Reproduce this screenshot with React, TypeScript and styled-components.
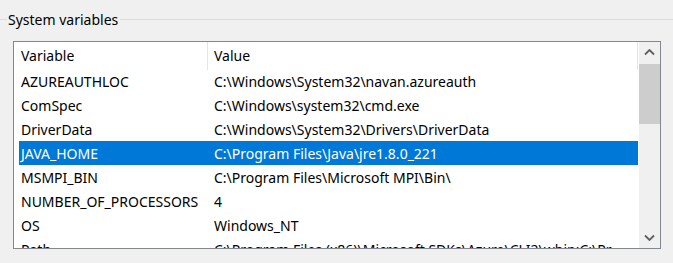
import React from "react";
import styled, { createGlobalStyle } from "styled-components";

const GlobalStyle = createGlobalStyle`
    html, body {
        margin: 0;
        padding: 0;
        background: #f0f0f0;
        font-family: "Noto Sans", "Liberation Sans", sans-serif;
        font-size: 14px;
        color: #000;
    }
`

interface EnvVar {
    name: string;
    value: string;
}

const systemVars: EnvVar[] = [
    { name: "AZUREAUTHLOC", value: "C:\\Windows\\System32\\navan.azureauth" },
    { name: "ComSpec", value: "C:\\Windows\\system32\\cmd.exe" },
    { name: "DriverData", value: "C:\\Windows\\System32\\Drivers\\DriverData" },
    { name: "JAVA_HOME", value: "C:\\Program Files\\Java\\jre1.8.0_221" },
    { name: "MSMPI_BIN", value: "C:\\Program Files\\Microsoft MPI\\Bin\\" },
    { name: "NUMBER_OF_PROCESSORS", value: "4" },
    { name: "OS", value: "Windows_NT" },
    { name: "Path", value: "C:\\Program Files (x86)\\Microsoft SDKs\\Azure\\CLI2\\wbin;C:\\Pr" },
];

const selectedName = "JAVA_HOME";

const Page = styled.div`
    width: 673px;
    height: 263px;
    overflow: hidden;
`

const GroupTitle = styled.div`
    display: flex;
    align-items: center;
    height: 20px;
    margin-top: 10px;
`

const GroupLine = styled.div<{ $stub?: boolean }>`
    height: 0;
    margin-top: -2px;
    border-top: 1px solid #dcdcdc;
    ${p => p.$stub ? "width: 7px;" : "flex: 1;"}
`

const GroupLabel = styled.span`
    padding: 0 2px 0 1px;
    line-height: 20px;
`

const ListBox = styled.div`
    margin: 11px 0 0 13px;
    width: 648px;
    height: 208px;
    box-sizing: border-box;
    border: 1px solid #828790;
    background: #fff;
    display: grid;
    grid-template-columns: 625px 21px;
    overflow: hidden;
`

const Content = styled.div`
    overflow: hidden;
`

const HeaderRow = styled.div`
    display: grid;
    grid-template-columns: 194px 430px;
    height: 27px;
`

const HeaderCell = styled.div<{ $pad: number }>`
    border-right: 1px solid #e5e5e5;
    padding-left: ${p => p.$pad}px;
    line-height: 28px;
    white-space: nowrap;
`

const Row = styled.div<{ $selected?: boolean }>`
    display: grid;
    grid-template-columns: 188px 1fr;
    height: 24px;
    margin: 0 0 0 5px;
    width: 619px;
    line-height: 25px;
    white-space: nowrap;
    background: ${p => p.$selected ? "#0078d7" : "transparent"};
    color: ${p => p.$selected ? "#fff" : "#000"};
`

const Cell = styled.div<{ $pad: number }>`
    padding-left: ${p => p.$pad}px;
    overflow: hidden;
`

const ScrollBar = styled.div`
    display: flex;
    flex-direction: column;
    background: #f0f0f0;
`

const ArrowButton = styled.div`
    height: 21px;
    display: flex;
    align-items: center;
    justify-content: center;
`

const Track = styled.div`
    flex: 1;
`

const Thumb = styled.div`
    height: 60px;
    margin-top: 1px;
    background: #cdcdcd;
`

const Chevron: React.FC<{ down?: boolean }> = ({ down }) => (
    <svg width="11" height="7" viewBox="0 0 11 7">
        <path
            d={down ? "M1 1.5 L5.5 6 L10 1.5" : "M1 5.5 L5.5 1 L10 5.5"}
            fill="none"
            stroke="#606060"
            strokeWidth="1.8"
        />
    </svg>
);

const App: React.FC = () => {
    return (<Page>
        <GlobalStyle />
        <GroupTitle>
            <GroupLine $stub />
            <GroupLabel>System variables</GroupLabel>
            <GroupLine />
        </GroupTitle>
        <ListBox>
            <Content>
                <HeaderRow>
                    <HeaderCell $pad={7}>Variable</HeaderCell>
                    <HeaderCell $pad={6}>Value</HeaderCell>
                </HeaderRow>
                {systemVars.map((v, idx) => (
                    <Row key={idx} $selected={v.name === selectedName}>
                        <Cell $pad={2}>{v.name}</Cell>
                        <Cell $pad={7}>{v.value}</Cell>
                    </Row>
                ))}
            </Content>
            <ScrollBar>
                <ArrowButton><Chevron /></ArrowButton>
                <Track><Thumb /></Track>
                <ArrowButton><Chevron down /></ArrowButton>
            </ScrollBar>
        </ListBox>
    </Page>);
}

export default App;
